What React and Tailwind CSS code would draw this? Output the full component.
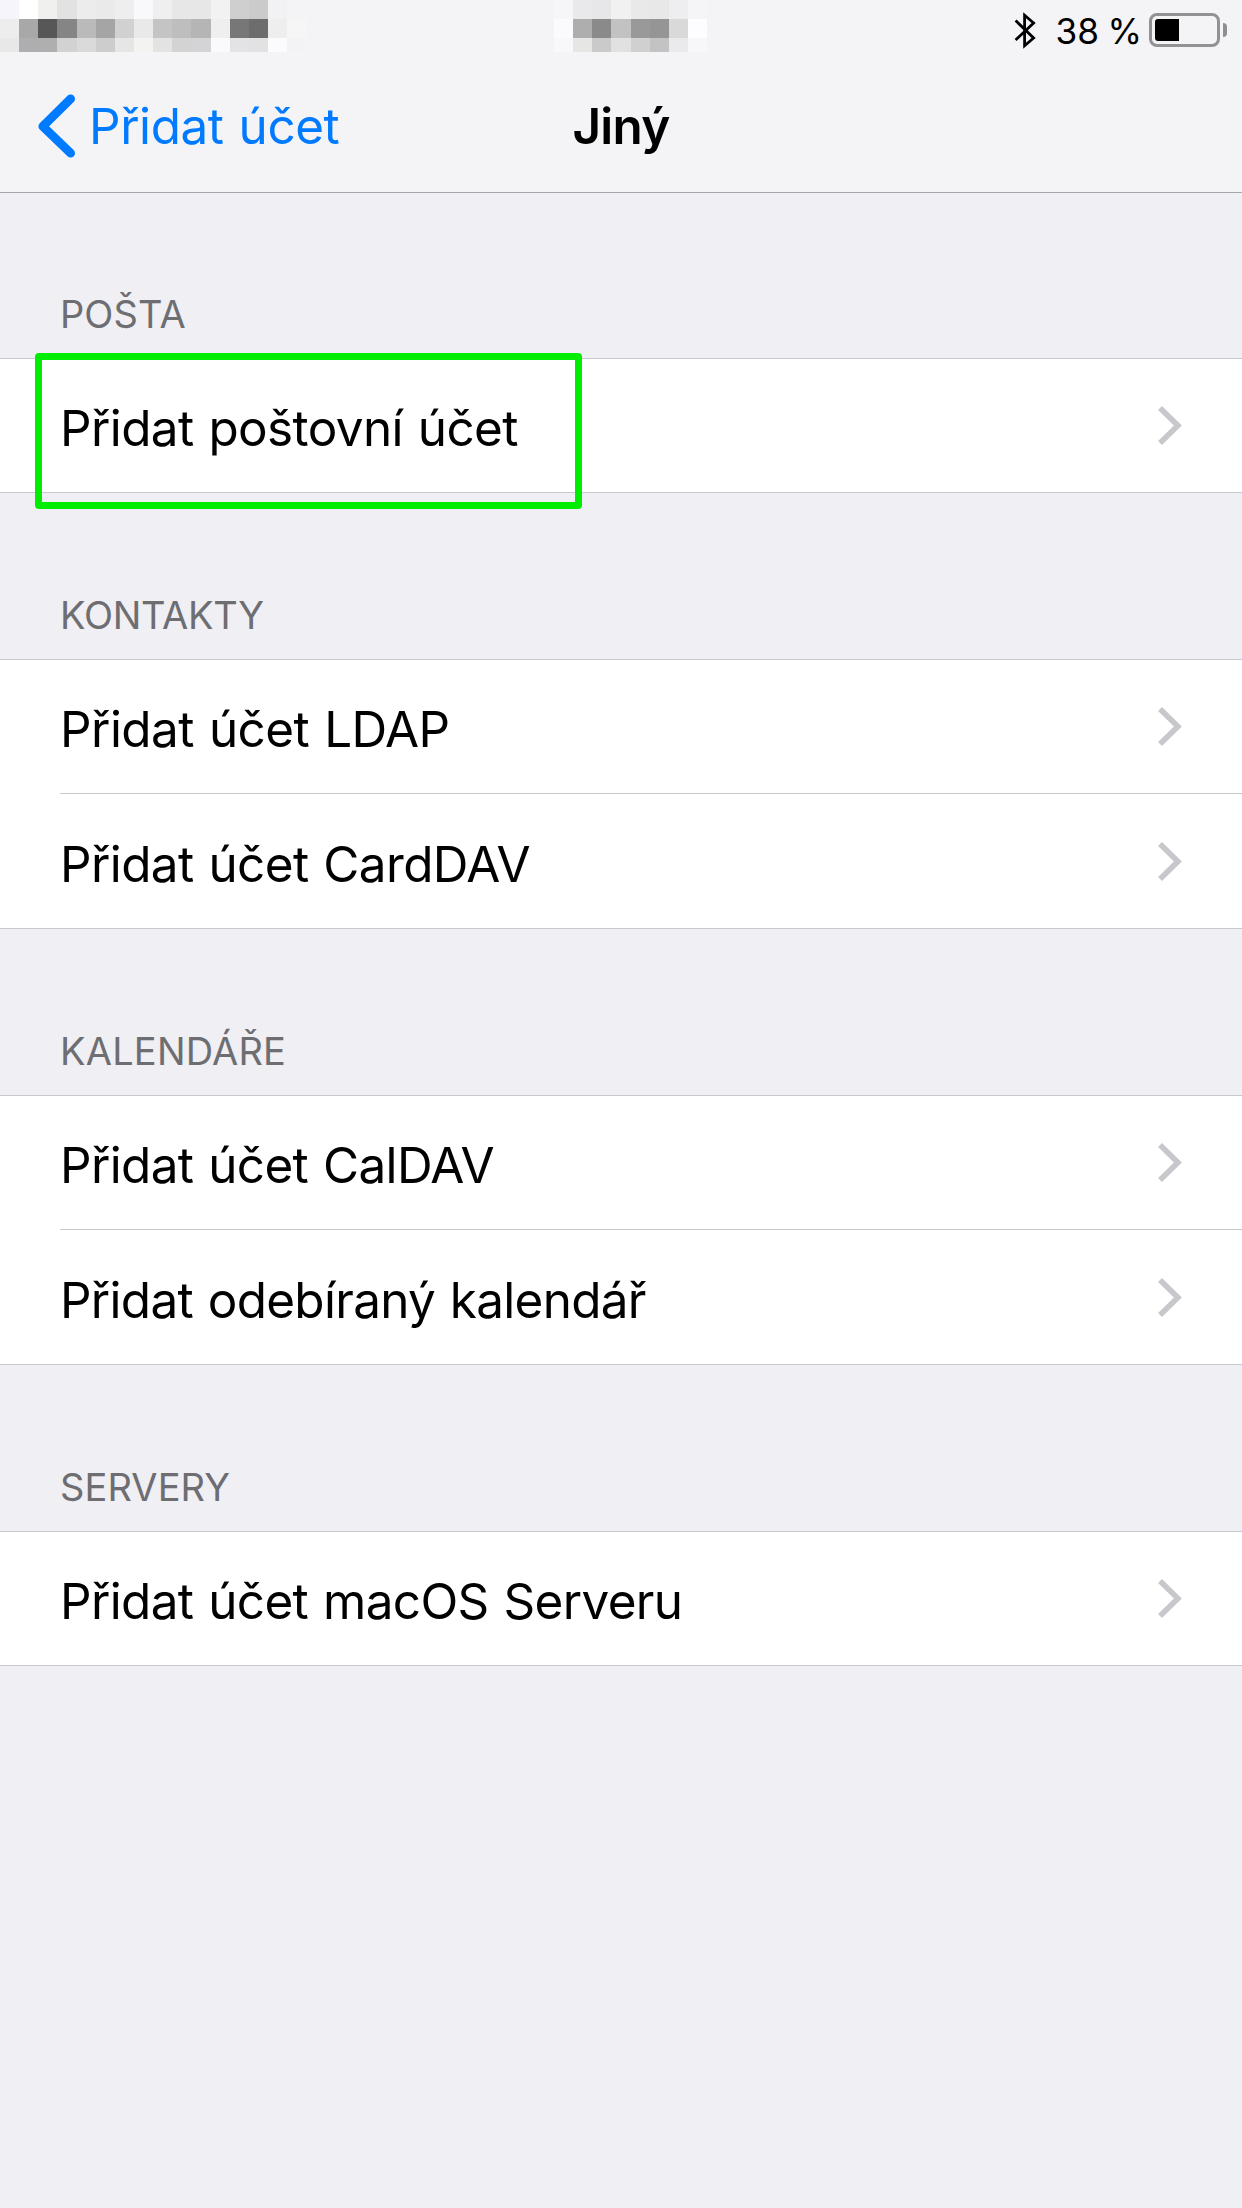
const SECTIONS = [
  {
    title: 'POŠTA',
    titleClass: 'tracking-[0.1px]',
    headerClass: 'h-[165px]',
    rows: [
      { label: 'Přidat poštovní účet', className: 'tracking-[-0.57px]', highlighted: true },
    ],
  },
  {
    title: 'KONTAKTY',
    titleClass: 'tracking-[-0.3px]',
    headerClass: 'h-[166px]',
    rows: [
      { label: 'Přidat účet LDAP', className: 'tracking-[-0.5px]' },
      { label: 'Přidat účet CardDAV', className: 'tracking-[-0.57px]' },
    ],
  },
  {
    title: 'KALENDÁŘE',
    titleClass: 'tracking-[0.2px]',
    headerClass: 'h-[166px]',
    rows: [
      { label: 'Přidat účet CalDAV', className: 'tracking-[-0.6px]' },
      { label: 'Přidat odebíraný kalendář', className: 'tracking-[-0.67px]' },
    ],
  },
  {
    title: 'SERVERY',
    titleClass: 'tracking-[0.1px]',
    headerClass: 'h-[166px]',
    rows: [{ label: 'Přidat účet macOS Serveru', className: 'tracking-[-0.6px]' }],
  },
];

// Pixelated carrier and clock, one colour per block
const CARRIER = [
  '#f5f5fb #ffffff #f0f0ef #e2e2e2 #ececec #eaeaeb #eeeeef #f9f9fc #efefef #e7e7e8 #e7e7e8 #f2f2f3 #cfcfcf #cbcbcb #f2f2f4 #f4f4f6',
  '#ededee #a8a8a8 #575757 #858585 #bababa #a5a5a5 #d1d1d1 #e9e9e9 #c4c4c4 #bebebe #b5b5b5 #efefef #777777 #6d6d6d #eeeeee #f6f6f7',
  '#e8e8e9 #aeaeb0 #afafaf #d2d2d2 #dadada #cdcdcd #e6e6e6 #f3f3f2 #e3e3e3 #d3d3d3 #d4d4d6 #fafafc #e3e3e5 #e2e2e2 #fbfbfd #f3f3f5',
];

const CLOCK = [
  '#f6f6f8 #e9e9eb #e7e7e9 #f1f1f1 #e9e9e9 #e8e8e8 #eeeef0 #f5f5f7',
  '#fbfbfd #aeaeae #8a8a8a #c2c2c2 #999999 #959595 #d9d9d9 #fdfdff',
  '#f8f8fa #e6e6e4 #cacaca #e1e1e1 #d0d0d0 #c3c3c3 #eaeaec #f7f7f9',
];

function Mosaic({ rows, className }) {
  return (
    <div className={className} aria-hidden="true">
      {rows.map((row, y) => (
        <div key={y} className="flex h-[19px] last:h-[14px]">
          {row.split(' ').map((color, x) => (
            <span key={x} className="w-[19.15px] shrink-0" style={{ backgroundColor: color }} />
          ))}
        </div>
      ))}
    </div>
  );
}

function BluetoothIcon() {
  return (
    <svg className="h-[38px] w-[22px]" viewBox="0 0 22 38" fill="none" stroke="#000" strokeWidth="2.8">
      <path d="M1.6 9.6 L19.6 27 L10.6 34.8 V4.2 L19.6 12 L1.6 29" />
    </svg>
  );
}

function Battery() {
  return (
    <div className="flex items-center gap-[3px]">
      <div className="h-[34px] w-[71px] rounded-[8px] border-3 border-[#929294] p-[3px]">
        <div className="h-[22px] w-[24px] rounded-l-[3px] bg-black" />
      </div>
      <div className="h-[14px] w-[4px] rounded-r-full bg-[#8e8e90]" />
    </div>
  );
}

function StatusBar() {
  return (
    <div className="flex h-[60px] items-start">
      <Mosaic rows={CARRIER} className="w-[306px]" />
      <Mosaic rows={CLOCK} className="ml-[248px] w-[154px]" />
      <div className="ml-auto flex h-[60px] items-center pr-[15px]">
        <BluetoothIcon />
        <span className="ml-[20px] mr-[7px] pt-[4px] text-[35.2px] leading-none [word-spacing:-1.5px]">38 %</span>
        <Battery />
      </div>
    </div>
  );
}

function NavBar() {
  return (
    <div className="grid h-[132px] grid-cols-[1fr_auto_1fr] items-center">
      <button type="button" className="flex items-center gap-[14px] pl-[38px] text-[#007aff]">
        <svg className="h-[64px] w-[37px]" viewBox="0 0 37 64" fill="none" stroke="currentColor">
          <path
            d="M32.6 4.9 L4.8 32.3 L32.6 59.2"
            strokeWidth="8.8"
            strokeLinecap="round"
            strokeLinejoin="round"
          />
        </svg>
        <span className="pt-[2px] text-[49.4px] leading-none tracking-[-0.4px] [word-spacing:1.5px]">
          Přidat účet
        </span>
      </button>
      <h1 className="pt-[2px] text-[49.4px] font-semibold leading-none tracking-[-0.7px]">Jiný</h1>
    </div>
  );
}

function Row({ label, className, highlighted }) {
  return (
    <li className="group relative pl-[60px]">
      <div className="flex h-[135px] items-center justify-between border-t border-[#c8c7cc] pr-[60px] group-first:h-[133px] group-first:border-t-0">
        <span className="pt-[7px] text-[49.4px] leading-none [word-spacing:1.5px]">
          <span className={className}>{label}</span>
        </span>
        <svg className="h-[39px] w-[24px]" viewBox="0 0 24 39" fill="none" stroke="#c7c7cc">
          <path d="M2 2 L19.9 19.5 L2 37" strokeWidth="5.6" />
        </svg>
      </div>
      {highlighted && (
        <div className="absolute left-[35px] top-[-6px] h-[156px] w-[547px] rounded-[4px] border-7 border-[#00ec00]" />
      )}
    </li>
  );
}

function Section({ title, titleClass, headerClass, rows }) {
  return (
    <section>
      <div className={`flex items-end pb-[25px] pl-[60px] ${headerClass}`}>
        <h2 className={`text-[38px] leading-none text-[#6d6d72] ${titleClass}`}>{title}</h2>
      </div>
      <ul className="border-y border-[#c8c7cc] bg-white">
        {rows.map((row) => (
          <Row key={row.label} {...row} />
        ))}
      </ul>
    </section>
  );
}

export default function App() {
  return (
    <div className="min-h-screen w-[1242px] bg-[#efeff4] font-['Inter','Liberation_Sans',sans-serif] text-black">
      <header className="border-b border-[#a7a7ab] bg-[#f4f4f6]">
        <StatusBar />
        <NavBar />
      </header>
      <main>
        {SECTIONS.map((section) => (
          <Section key={section.title} {...section} />
        ))}
      </main>
    </div>
  );
}
